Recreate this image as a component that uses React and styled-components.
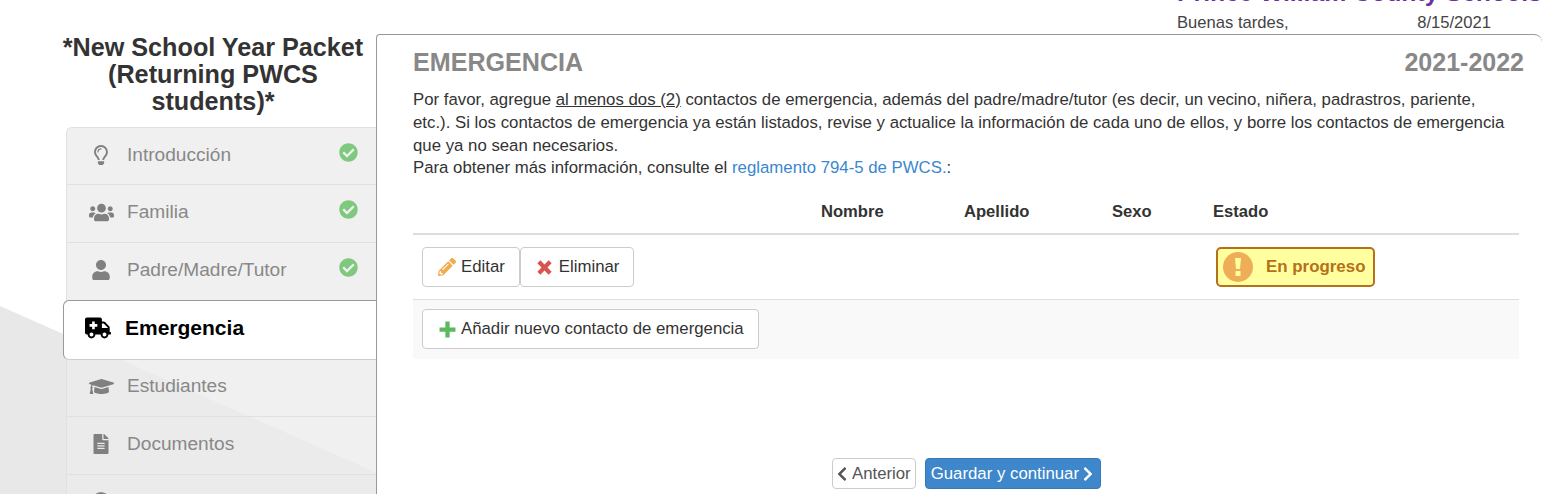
import styled, { createGlobalStyle } from 'styled-components';
import {
  FaRegLightbulb,
  FaUsers,
  FaUser,
  FaAmbulance,
  FaGraduationCap,
  FaFileAlt,
  FaQuestionCircle,
  FaCheckCircle,
  FaPencilAlt,
  FaChevronLeft,
  FaChevronRight,
} from 'react-icons/fa';

const GlobalStyle = createGlobalStyle`
  html, body {
    margin: 0;
    height: 100%;
    overflow: hidden;
    background: #fff;
  }
  body {
    font-family: "Liberation Sans", Arial, sans-serif;
    font-size: 16.8px;
    color: #333;
  }
`;

const steps = [
  { label: 'Introducción', icon: FaRegLightbulb, size: 20, done: true },
  { label: 'Familia', icon: FaUsers, size: 25, done: true },
  { label: 'Padre/Madre/Tutor', icon: FaUser, size: 20, done: true },
  { label: 'Emergencia', icon: FaAmbulance, size: 26, active: true },
  { label: 'Estudiantes', icon: FaGraduationCap, size: 25 },
  { label: 'Documentos', icon: FaFileAlt, size: 20 },
  { label: 'Revisar/Enviar', icon: FaQuestionCircle, size: 20 },
];

// glyphicon style plus, the same shape turned 45deg gives the remove cross
const PlusGlyph = ({ rotate }) => (
  <svg width="17" height="17" viewBox="0 0 16 16" fill="currentColor">
    <path
      d="M6 .5h4v5.5h5.5v4H10v5.5H6V10H.5V6H6z"
      transform={rotate ? 'rotate(45 8 8)' : undefined}
    />
  </svg>
);

const App = () => (
  <Page>
    <GlobalStyle />
    <Wedge />
    <Header>
      <Brand>Prince William County Schools</Brand>
      <Greeting>
        <span>Buenas tardes,</span>
        <span>8/15/2021</span>
      </Greeting>
    </Header>
    <Body>
      <Sidebar>
        <PacketTitle>*New School Year Packet (Returning PWCS students)*</PacketTitle>
        <StepList>
          {steps.map(({ label, icon: Icon, size, done, active }) => (
            <Step key={label} $active={active}>
              <StepIcon $active={active}>
                <Icon size={size} />
              </StepIcon>
              <StepLabel $active={active}>{label}</StepLabel>
              {done && (
                <DoneMark>
                  <FaCheckCircle />
                </DoneMark>
              )}
            </Step>
          ))}
        </StepList>
      </Sidebar>
      <Main>
        <TitleRow>
          <Heading>EMERGENCIA</Heading>
          <Year>2021-2022</Year>
        </TitleRow>
        <Intro>
          Por favor, agregue <u>al menos dos (2)</u> contactos de emergencia, además del
          padre/madre/tutor (es decir, un vecino, niñera, padrastros, pariente, etc.). Si los
          contactos de emergencia ya están listados, revise y actualice la información de cada uno
          de ellos, y borre los contactos de emergencia que ya no sean necesarios.
          <br />
          Para obtener más información, consulte el <IntroLink href="#">reglamento 794-5 de PWCS.</IntroLink>:
        </Intro>
        <ContactTable>
          <thead>
            <tr>
              <HeadCell $width={399} />
              <HeadCell $width={143}>Nombre</HeadCell>
              <HeadCell $width={148}>Apellido</HeadCell>
              <HeadCell $width={101}>Sexo</HeadCell>
              <HeadCell>Estado</HeadCell>
            </tr>
          </thead>
          <tbody>
            <tr>
              <ActionCell>
                <Button>
                  <IconSlot $color="#f0ad4e">
                    <FaPencilAlt />
                  </IconSlot>
                  Editar
                </Button>
                <Button>
                  <IconSlot $color="#d9534f">
                    <PlusGlyph rotate />
                  </IconSlot>
                  Eliminar
                </Button>
              </ActionCell>
              <BodyCell />
              <BodyCell />
              <BodyCell />
              <BodyCell>
                <StatusBadge>
                  <svg width="30" height="30" viewBox="0 0 30 30">
                    <circle cx="15" cy="15" r="15" fill="#f0ad58" />
                    <path d="M12 6h6l-1 11h-4zM12.5 19h5v5h-5z" fill="#ffffa0" />
                  </svg>
                  En progreso
                </StatusBadge>
              </BodyCell>
            </tr>
          </tbody>
          <tfoot>
            <tr>
              <FootCell colSpan={5}>
                <Button>
                  <IconSlot $color="#5cb85c">
                    <PlusGlyph />
                  </IconSlot>
                  Añadir nuevo contacto de emergencia
                </Button>
              </FootCell>
            </tr>
          </tfoot>
        </ContactTable>
        <Pager>
          <PrevButton>
            <FaChevronLeft />
            Anterior
          </PrevButton>
          <NextButton>
            Guardar y continuar
            <FaChevronRight />
          </NextButton>
        </Pager>
      </Main>
    </Body>
  </Page>
);

export default App;

// Styled Components
const Page = styled.div`
  position: relative;
  width: 1562px;
  height: 494px;
  overflow: hidden;
  background: #fff;
`;

// decorative grey diagonal behind the sidebar
const Wedge = styled.div`
  position: absolute;
  inset: 0;
  background: #e8e8e8;
  clip-path: polygon(0 306px, 377px 473px, 377px 494px, 0 494px);
`;

const Header = styled.header`
  position: relative;
  height: 34px;
  padding-left: 1177px;
  display: flex;
  flex-direction: column;
  justify-content: flex-end;
  overflow: hidden;
`;

const Brand = styled.div`
  flex: none;
  color: #6b2fa5;
  font-size: 24.8px;
  font-weight: 700;
  line-height: 26px;
  white-space: nowrap;
  margin-bottom: 8px;
`;

const Greeting = styled.div`
  flex: none;
  display: flex;
  justify-content: space-between;
  width: 314px;
  height: 20px;
  line-height: 18px;
  font-size: 16.6px;
  color: #444;
  white-space: nowrap;
`;

const Body = styled.div`
  position: relative;
  display: flex;
  align-items: flex-start;
`;

const Sidebar = styled.aside`
  width: 376px;
  flex: none;
  box-sizing: border-box;
  padding-left: 50px;
`;

const PacketTitle = styled.h2`
  margin: 0 0 12px;
  padding: 0;
  text-align: center;
  font-size: 25.2px;
  line-height: 27px;
  font-weight: 700;
  color: #333;
`;

const StepList = styled.div`
  margin-left: 16px;
`;

const Step = styled.div`
  display: flex;
  align-items: flex-start;
  box-sizing: border-box;
  height: ${({ $active }) => ($active ? '60px' : '58px')};
  margin-left: ${({ $active }) => ($active ? '-3px' : '0')};
  margin-top: ${({ $active }) => ($active ? '-1px' : '0')};
  margin-bottom: ${({ $active }) => ($active ? '-1px' : '0')};
  position: ${({ $active }) => ($active ? 'relative' : 'static')};
  padding: 17px 0 0 22px;
  background: ${({ $active }) => ($active ? '#fff' : 'rgba(236, 236, 236, 0.78)')};
  border: 1px solid ${({ $active }) => ($active ? '#999' : '#e0e0e0')};
  border-right: 0;
  border-top-width: ${({ $active }) => ($active ? '1px' : '0')};
  border-bottom-color: ${({ $active }) => ($active ? '#ccc' : '#e0e0e0')};
  border-radius: ${({ $active }) => ($active ? '6px 0 0 6px' : '0')};
  &:first-child {
    border-top-width: 1px;
    border-top-left-radius: 6px;
  }
`;

const StepIcon = styled.span`
  width: 24px;
  height: 20px;
  flex: none;
  display: flex;
  align-items: center;
  justify-content: center;
  color: ${({ $active }) => ($active ? '#000' : '#808080')};
  svg {
    flex: none;
  }
`;

const StepLabel = styled.span`
  margin-left: ${({ $active }) => ($active ? '15px' : '14px')};
  font-size: ${({ $active }) => ($active ? '21px' : '19.1px')};
  font-weight: ${({ $active }) => ($active ? 700 : 400)};
  line-height: 20px;
  color: ${({ $active }) => ($active ? '#000' : '#888')};
`;

const DoneMark = styled.span`
  margin-left: auto;
  margin-right: 18px;
  margin-top: -2px;
  font-size: 19px;
  line-height: 19px;
  color: #7fc97f;
`;

const Main = styled.main`
  flex: 1;
  box-sizing: border-box;
  height: 470px;
  margin-right: 20px;
  padding: 12px 23px 0 36px;
  background: #fff;
  border: 1px solid #999;
  border-width: 1px 0 0 1px;
  border-top-right-radius: 8px;
  border-top-left-radius: 4px;
  position: relative;
`;

const TitleRow = styled.div`
  display: flex;
  justify-content: space-between;
  align-items: baseline;
`;

const Heading = styled.h1`
  margin: 0;
  font-size: 25.1px;
  line-height: 30px;
  font-weight: 700;
  color: #888;
`;

const Year = styled.div`
  font-size: 25px;
  line-height: 30px;
  font-weight: 700;
  color: #888;
  margin-right: -5px;
`;

const Intro = styled.p`
  margin: 12px 0 0;
  font-size: 16.8px;
  line-height: 22.8px;
  color: #333;
  width: 1098px;
`;

const IntroLink = styled.a`
  color: #3a87cf;
  text-decoration: none;
`;

const ContactTable = styled.table`
  width: 1106px;
  margin-top: 10px;
  border-collapse: collapse;
  table-layout: fixed;
`;

const HeadCell = styled.th`
  width: ${({ $width }) => ($width ? `${$width}px` : 'auto')};
  height: 44px;
  padding: 0 0 0 9px;
  box-sizing: border-box;
  text-align: left;
  font-size: 16.6px;
  font-weight: 700;
  color: #333;
  border-bottom: 2px solid #ddd;
`;

const BodyCell = styled.td`
  height: 65px;
  padding: 0 0 0 9px;
  box-sizing: border-box;
  border-bottom: 1px solid #ddd;
`;

const ActionCell = styled(BodyCell)`
  white-space: nowrap;
`;

const FootCell = styled.td`
  height: 59px;
  padding: 0 0 0 9px;
  background: #f9f9f9;
`;

const Button = styled.button`
  display: inline-flex;
  align-items: center;
  height: 40px;
  box-sizing: border-box;
  padding: 0 14px 0 15px;
  background: #fff;
  border: 1px solid #ccc;
  border-radius: 4px;
  font-family: inherit;
  font-size: 16.8px;
  color: #333;
`;

const IconSlot = styled.span`
  display: inline-flex;
  justify-content: center;
  width: 18px;
  margin-right: 5px;
  font-size: 18px;
  color: ${({ $color }) => $color};
`;

const StatusBadge = styled.div`
  display: inline-flex;
  align-items: center;
  width: 159px;
  height: 40px;
  box-sizing: border-box;
  margin-left: 3px;
  padding-left: 5px;
  gap: 13px;
  background: #ffffa0;
  border: 2px solid #b5701a;
  border-radius: 5px;
  font-size: 16.9px;
  font-weight: 700;
  color: #b5701a;
  white-space: nowrap;
`;

const Pager = styled.div`
  display: flex;
  justify-content: center;
  gap: 9px;
  position: absolute;
  top: 423px;
  left: 0;
  right: 0;
  padding-left: 14px;
`;

const PrevButton = styled.button`
  display: inline-flex;
  align-items: center;
  gap: 5px;
  height: 31px;
  padding: 0 4px;
  box-sizing: border-box;
  background: #fff;
  border: 1px solid #ccc;
  border-radius: 4px;
  font-family: inherit;
  font-size: 16.8px;
  color: #555;
  svg { color: #555; font-size: 16px; margin: 0 -3px; }
`;

const NextButton = styled.button`
  display: inline-flex;
  align-items: center;
  gap: 4px;
  height: 31px;
  padding: 0 7px 0 5px;
  box-sizing: border-box;
  background: #3d87ca;
  border: 1px solid #337ab7;
  border-radius: 4px;
  font-family: inherit;
  font-size: 16.8px;
  color: #fff;
  svg { font-size: 16px; margin: 0 -3px; }
`;
